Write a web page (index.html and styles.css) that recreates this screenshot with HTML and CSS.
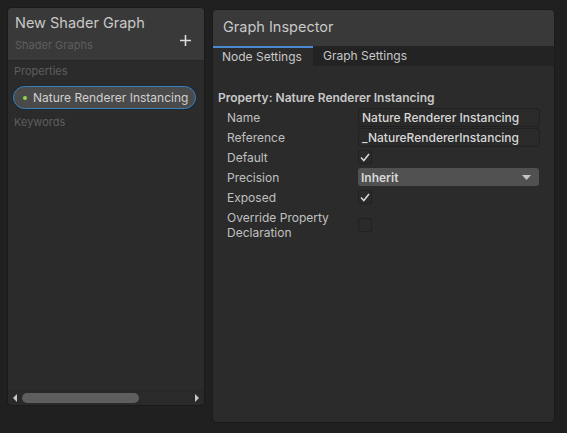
FILE: index.html
```html
<!DOCTYPE html>
<html>
<head>
<meta charset="utf-8">
<link rel="stylesheet" href="styles.css">
</head>
<body>
<div class="root">
  <div class="bb">
    <div class="bb-head">
      <div class="bb-title">New Shader Graph</div>
      <div class="bb-sub-row">
        <div class="bb-sub">Shader Graphs</div>
        <svg class="plus" width="11" height="11" viewBox="0 0 11 11"><path d="M5.5 0 V11 M0 5.5 H11" stroke="#dcdcdc" stroke-width="1.6"/></svg>
      </div>
    </div>
    <div class="bb-body">
      <div class="section">Properties</div>
      <div class="pill"><span class="dot"></span><span class="pill-text">Nature Renderer Instancing</span></div>
      <div class="section kw">Keywords</div>
      <div class="spacer"></div>
      <div class="hscroll">
        <svg class="arr" width="6" height="8" viewBox="0 0 6 8"><path d="M5 0 L1 4 L5 8 Z" fill="#c8c8c8"/></svg>
        <div class="track"><div class="thumb"></div></div>
        <svg class="arr" width="6" height="8" viewBox="0 0 6 8"><path d="M1 0 L5 4 L1 8 Z" fill="#c8c8c8"/></svg>
      </div>
    </div>
  </div>
  <div class="gi">
    <div class="gi-head">Graph Inspector</div>
    <div class="tabs">
      <div class="tab active">Node Settings</div>
      <div class="tab">Graph Settings</div>
    </div>
    <div class="gi-body">
      <div class="prop-title">Property: Nature Renderer Instancing</div>
      <div class="row">
        <div class="label">Name</div>
        <div class="field">Nature Renderer Instancing</div>
      </div>
      <div class="row">
        <div class="label">Reference</div>
        <div class="field">_NatureRendererInstancing</div>
      </div>
      <div class="row">
        <div class="label">Default</div>
        <div class="check"><svg width="10" height="9" viewBox="0 0 10 9"><path d="M1 4.5 L3.8 7.5 L9 1" stroke="#d8d8d8" stroke-width="1.5" fill="none"/></svg></div>
      </div>
      <div class="row">
        <div class="label">Precision</div>
        <div class="dropdown"><span>Inherit</span><svg width="9" height="5" viewBox="0 0 9 5"><path d="M0 0 L9 0 L4.5 5 Z" fill="#c4c4c4"/></svg></div>
      </div>
      <div class="row">
        <div class="label">Exposed</div>
        <div class="check"><svg width="10" height="9" viewBox="0 0 10 9"><path d="M1 4.5 L3.8 7.5 L9 1" stroke="#d8d8d8" stroke-width="1.5" fill="none"/></svg></div>
      </div>
      <div class="row tall">
        <div class="label">Override Property<br>Declaration</div>
        <div class="check"></div>
      </div>
    </div>
  </div>
</div>
</body>
</html>
```
FILE: styles.css
```css
* { box-sizing: border-box; }
html, body { margin: 0; padding: 0; background: #202020; }
body {
  width: 567px; height: 433px; overflow: hidden;
  font-family: Inter, "Noto Sans", sans-serif;
  color: #c4c4c4;
}
.root {
  display: flex;
  align-items: flex-start;
  padding: 7px 0 0 7px;
  gap: 7px;
}
.bb {
  width: 198px;
  height: 399px;
  background: #2b2b2b;
  border-radius: 5px;
  border: 1px solid #1a1a1a;
  display: flex;
  flex-direction: column;
  overflow: hidden;
}
.bb-head {
  background: #393939;
  height: 53px;
  padding: 6px 7px 0 7px;
  border-bottom: 1px solid #252525;
}
.bb-title { font-size: 14.5px; color: #c8c8c8; line-height: 18px; }
.bb-sub-row { display: flex; justify-content: space-between; align-items: center; margin-top: 5px; }
.bb-sub { font-size: 11px; color: #5e5e5e; line-height: 16px; }
.plus { margin-top: -9px; margin-right: 6px; }
.bb-body {
  flex: 1;
  display: flex;
  flex-direction: column;
}
.section { font-size: 11px; color: #5e5e5e; padding: 3px 0 0 6px; line-height: 15px; height: 25px; }
.section.kw { padding-top: 6px; }
.pill {
  margin: 0 8px 0 5px;
  height: 23px;
  border: 1.5px solid #3d80b8;
  border-radius: 12px;
  background: #4a4a4a;
  display: flex;
  align-items: center;
  padding-left: 9px;
  box-shadow: 0 0 0 1px #1c2a36;
}
.dot { width: 4px; height: 4px; border-radius: 50%; background: #8fd848; margin-right: 6px; }
.pill-text { font-size: 12px; color: #d0d0d0; white-space: nowrap; }
.spacer { flex: 1; }
.hscroll {
  height: 14px;
  display: flex;
  align-items: center;
  padding: 0 4px 0 4px;
  border-top: 1px solid #262626;
  background: #2a2a2a;
  margin-bottom: 1px;
}
.arr { flex: none; }
.track { flex: 1; margin: 0 4px; height: 10px; }
.thumb { width: 117px; height: 10px; background: #5e5e5e; border-radius: 5px; }
.gi {
  width: 343px;
  height: 414px;
  margin-top: 2px;
  background: #2b2b2b;
  border-radius: 5px;
  border: 1px solid #1a1a1a;
  overflow: hidden;
  display: flex;
  flex-direction: column;
}
.gi-head {
  background: #393939;
  height: 36px;
  padding: 8px 0 0 10px;
  font-size: 14.5px;
  color: #c8c8c8;
}
.tabs { display: flex; background: #232323; height: 20px; }
.tab { font-size: 12px; padding: 2px 10px 0 10px; color: #c8c8c8; height: 20px; line-height: 16px; }
.tab.active { background: #2b2b2b; border-top: 2px solid #4a8ad0; width: 100px; padding-top: 1px; padding-left: 9px; }
.gi-body { padding: 25px 0 0 5px; }
.prop-title { font-size: 12px; font-weight: 600; color: #c8c8c8; line-height: 14px; margin-bottom: 2px; }
.row { display: flex; align-items: center; height: 20px; padding-left: 9px; }
.row.tall { height: 35px; align-items: center; }
.label { width: 131px; font-size: 12px; color: #c0c0c0; line-height: 15px; }
.field {
  width: 182px; height: 19px;
  background: #2a2a2a;
  border: 1px solid #212121;
  border-radius: 3px;
  font-size: 12px; font-weight: 500;
  color: #d8d8d8;
  padding: 1px 0 0 3px;
  line-height: 15px;
}
.check {
  width: 14px; height: 14px;
  background: #2a2a2a;
  border: 1px solid #212121;
  border-radius: 2px;
  display: flex; align-items: center; justify-content: center;
}
.dropdown {
  width: 181px; height: 18px;
  background: #515151;
  border-radius: 3px;
  display: flex; align-items: center; justify-content: space-between;
  padding: 0 8px 0 3px;
  font-size: 12px; font-weight: 600; color: #d8d8d8;
}
```
